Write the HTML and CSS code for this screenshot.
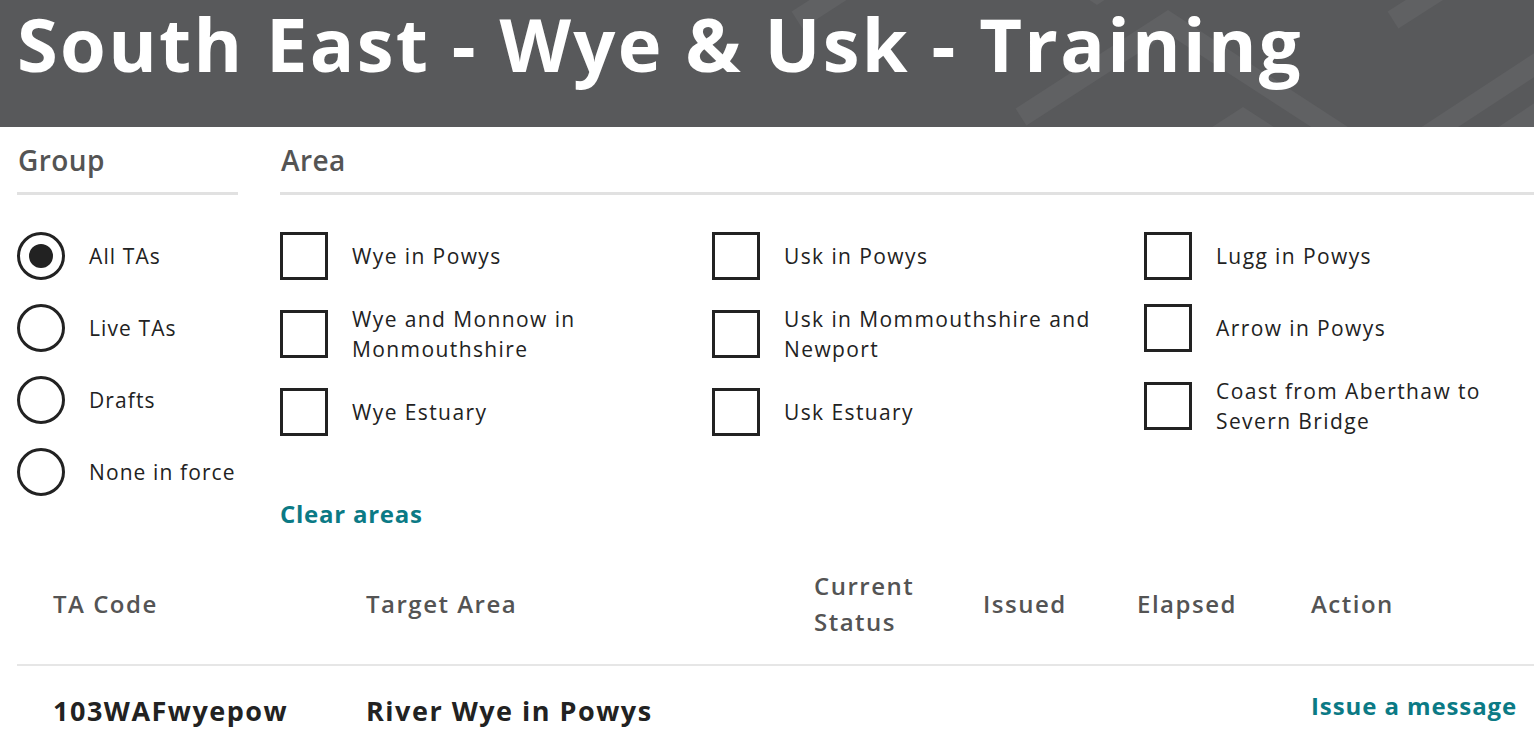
FILE: index.html
```html
<!DOCTYPE html>
<html lang="en">
<head>
<meta charset="utf-8">
<title>South East - Wye &amp; Usk - Training</title>
<link rel="stylesheet" href="styles.css">
</head>
<body>
<header class="banner">
  <svg class="banner-pattern" width="1534" height="127" viewBox="0 0 1534 127" aria-hidden="true">
    <g fill="none" stroke="#606163" stroke-width="20">
      <polyline points="797,20 842,-9"/>
      <polyline points="1060,-31 1097,-7 1134,-31"/>
      <polyline points="1021,117 1168,22 1345,137"/>
      <polyline points="1195,150 1243,119 1291,150"/>
      <polyline points="1393,20 1440,-10"/>
      <polyline points="1420,140 1545,58"/>
      <polyline points="1497,140 1545,108"/>
    </g>
  </svg>
  <h1 class="banner-title">South East - Wye &amp; Usk - Training</h1>
</header>
<main class="page">
  <section class="filters">
    <div class="group">
      <h2 class="filter-heading">Group</h2>
      <ul class="option-list">
        <li class="option"><span class="radio radio-checked"></span><span class="option-label option-label-single">All TAs</span></li>
        <li class="option"><span class="radio"></span><span class="option-label option-label-single">Live TAs</span></li>
        <li class="option"><span class="radio"></span><span class="option-label option-label-single">Drafts</span></li>
        <li class="option"><span class="radio"></span><span class="option-label option-label-single">None in force</span></li>
      </ul>
    </div>
    <div class="area">
      <h2 class="filter-heading">Area</h2>
      <div class="area-grid">
        <ul class="option-list">
          <li class="option"><span class="checkbox"></span><span class="option-label">Wye in Powys</span></li>
          <li class="option"><span class="checkbox"></span><span class="option-label">Wye and Monnow in Monmouthshire</span></li>
          <li class="option"><span class="checkbox"></span><span class="option-label">Wye Estuary</span></li>
        </ul>
        <ul class="option-list">
          <li class="option"><span class="checkbox"></span><span class="option-label">Usk in Powys</span></li>
          <li class="option"><span class="checkbox"></span><span class="option-label">Usk in Mommouthshire and Newport</span></li>
          <li class="option"><span class="checkbox"></span><span class="option-label">Usk Estuary</span></li>
        </ul>
        <ul class="option-list">
          <li class="option"><span class="checkbox"></span><span class="option-label">Lugg in Powys</span></li>
          <li class="option"><span class="checkbox"></span><span class="option-label">Arrow in Powys</span></li>
          <li class="option"><span class="checkbox"></span><span class="option-label">Coast from Aberthaw to Severn Bridge</span></li>
        </ul>
      </div>
      <a class="clear-link" href="#">Clear areas</a>
    </div>
  </section>
  <div class="ta-table">
    <div class="ta-row ta-head">
      <div class="ta-cell">TA Code</div>
      <div class="ta-cell">Target Area</div>
      <div class="ta-cell">Current Status</div>
      <div class="ta-cell">Issued</div>
      <div class="ta-cell">Elapsed</div>
      <div class="ta-cell">Action</div>
    </div>
    <div class="ta-row ta-body">
      <div class="ta-cell">103WAFwyepow</div>
      <div class="ta-cell">River Wye in Powys</div>
      <div class="ta-cell"></div>
      <div class="ta-cell"></div>
      <div class="ta-cell"></div>
      <div class="ta-cell ta-action"><a class="action-link" href="#">Issue a message</a></div>
    </div>
  </div>
</main>
</body>
</html>
```
FILE: styles.css
```css
* { box-sizing: border-box; }
html, body { margin: 0; padding: 0; }
body {
  font-family: "Open Sans", "Noto Sans", sans-serif;
  color: #222222;
  background: #ffffff;
  overflow-x: hidden;
}
.banner {
  position: relative;
  height: 127px;
  background: #58595b;
  overflow: hidden;
  padding-left: 17px;
  padding-top: 2px;
}
.banner-pattern {
  position: absolute;
  left: 0;
  top: 0;
}
.banner-title {
  position: relative;
  margin: 0;
  color: #ffffff;
  font-weight: 700;
  font-size: 74px;
  line-height: 84px;
  letter-spacing: 2.3px;
  white-space: nowrap;
}
.page {
  padding-left: 17px;
}
.filters {
  display: flex;
}
.group {
  width: 221px;
  flex: none;
  margin-right: 42px;
}
.area {
  flex: 1;
}
.filter-heading {
  margin: 0;
  padding: 16px 0 15px 1px;
  font-size: 28px;
  line-height: 34px;
  font-weight: 600;
  letter-spacing: 0.4px;
  color: #545454;
  border-bottom: 3px solid #e1e1e1;
}
.option-list {
  list-style: none;
  margin: 37px 0 0;
  padding: 0;
  display: flex;
  flex-direction: column;
  gap: 24px;
}
.option {
  display: flex;
  align-items: center;
  gap: 24px;
  min-height: 48px;
}
.option-label {
  font-size: 21px;
  line-height: 30px;
  letter-spacing: 1.4px;
  color: #222222;
}
.option-label-single {
  white-space: nowrap;
  letter-spacing: 1.1px;
}
.radio {
  flex: none;
  width: 48px;
  height: 48px;
  border: 3px solid #222222;
  border-radius: 50%;
  display: flex;
  align-items: center;
  justify-content: center;
}
.radio-checked::after {
  content: "";
  width: 24px;
  height: 24px;
  border-radius: 50%;
  background: #222222;
}
.checkbox {
  flex: none;
  width: 48px;
  height: 48px;
  border: 3px solid #222222;
}
.area-grid {
  display: grid;
  grid-template-columns: repeat(3, 390px);
  column-gap: 42px;
  align-items: start;
}
.clear-link {
  display: inline-block;
  margin-top: 63px;
  font-size: 24px;
  line-height: 30px;
  font-weight: 700;
  letter-spacing: 0.75px;
  color: #0b7a85;
  text-decoration: none;
}
.ta-table {
  margin-top: 15px;
}
.ta-row {
  display: grid;
  grid-template-columns: 313px 448px 169px 154px 174px 1fr;
  align-items: center;
}
.ta-head {
  padding: 24px 0;
  border-bottom: 2px solid #e6e6e6;
}
.ta-cell {
  padding-left: 36px;
}
.ta-head .ta-cell {
  font-size: 24px;
  line-height: 36px;
  font-weight: 600;
  letter-spacing: 1.5px;
  color: #545454;
}
.ta-body {
  padding: 27px 0 23px;
}
.ta-body .ta-cell {
  font-size: 27px;
  line-height: 36px;
  font-weight: 700;
  letter-spacing: 1.5px;
  color: #222222;
}
.ta-body .ta-action {
  align-self: start;
  line-height: 24px;
}
.ta-body .action-link {
  font-size: 24px;
  letter-spacing: 0.9px;
  color: #0b7a85;
  text-decoration: none;
  white-space: nowrap;
}
```
